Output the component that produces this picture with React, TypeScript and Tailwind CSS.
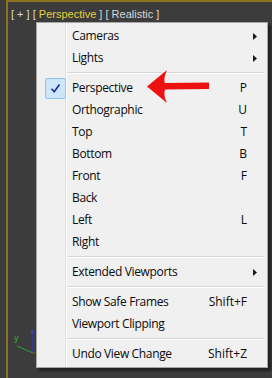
import React from "react";

type Row =
    | { kind: "item"; label: string; key?: string; sub?: boolean; checked?: boolean }
    | { kind: "sep" };

const rows: Row[] = [
    { kind: "item", label: "Cameras", sub: true },
    { kind: "item", label: "Lights", sub: true },
    { kind: "sep" },
    { kind: "item", label: "Perspective", key: "P", checked: true },
    { kind: "item", label: "Orthographic", key: "U" },
    { kind: "item", label: "Top", key: "T" },
    { kind: "item", label: "Bottom", key: "B" },
    { kind: "item", label: "Front", key: "F" },
    { kind: "item", label: "Back" },
    { kind: "item", label: "Left", key: "L" },
    { kind: "item", label: "Right" },
    { kind: "sep" },
    { kind: "item", label: "Extended Viewports", sub: true },
    { kind: "sep" },
    { kind: "item", label: "Show Safe Frames", key: "Shift+F" },
    { kind: "item", label: "Viewport Clipping" },
    { kind: "sep" },
    { kind: "item", label: "Undo View Change", key: "Shift+Z" },
];

function Arrow() {
    return (
        <svg width="4" height="7" viewBox="0 0 4 7" className="block">
            <path d="M0 0 L4 3.5 L0 7 Z" fill="#1a1a1a" />
        </svg>
    );
}

function Check() {
    return (
        <div className="w-[21px] h-[21px] rounded-[2px] border border-[#8fc3ef] bg-[#cde6fb] flex items-center justify-center">
            <svg width="11" height="11" viewBox="0 0 11 11">
                <path d="M1.5 5.8 L4.2 8.8 L9.5 1.5" stroke="#1c2a8a" strokeWidth="1.6" fill="none" />
            </svg>
        </div>
    );
}

function Menu() {
    return (
        <div className="absolute left-[36px] top-[22px] w-[232px] bg-[#f0f0f0] border border-[#a7a7a7] shadow-[3px_3px_2px_rgba(0,0,0,0.45)] py-[2px] text-[12px] text-[#0a0a0a] [font-family:'Open_Sans',sans-serif]">
            <div className="absolute left-[28px] top-0 bottom-0 w-px bg-[#e2e2e2]" />
            <div className="absolute left-[29px] top-0 bottom-0 w-px bg-white" />
            {rows.map((r, i) =>
                r.kind === "sep" ? (
                    <div key={i} className="h-[8px] flex items-center pl-[30px] pr-[3px]">
                        <div className="w-full">
                            <div className="h-px bg-[#d7d7d7]" />
                            <div className="h-px bg-white" />
                        </div>
                    </div>
                ) : (
                    <div key={i} className="relative h-[22px] flex items-center">
                        <div className="w-[35px] flex justify-center pl-[2px]">
                            {r.checked ? <Check /> : null}
                        </div>
                        <span className="flex-1 tracking-[-0.35px]">{r.label}</span>
                        <span className="text-right">{r.key ?? ""}</span>
                        <div className="w-[20px] pl-[6px]">{r.sub ? <Arrow /> : null}</div>
                    </div>
                )
            )}
        </div>
    );
}

function RedArrow() {
    return (
        <svg className="absolute left-[146px] top-[69px]" width="66" height="36" viewBox="0 0 66 36">
            <path d="M1 17.5 L21 1 Q17 10 19 14 L63 13.5 L63 20 L19 20.5 Q17 26 21 34 Z" fill="#ee1111" />
        </svg>
    );
}

function Gizmo() {
    return (
        <svg className="absolute left-[12px] top-[327px]" width="26" height="30" viewBox="0 0 26 30">
            <line x1="21" y1="6" x2="21" y2="26" stroke="#1f3fe0" strokeWidth="1" />
            <line x1="5" y1="19" x2="21" y2="26" stroke="#1faa2a" strokeWidth="1" />
            <line x1="21" y1="26" x2="24" y2="26" stroke="#e02020" strokeWidth="1" />
            <text x="19" y="6" fontSize="6" fill="#3050ff" fontFamily="DejaVu Sans">z</text>
            <text x="2" y="14" fontSize="8" fill="#33bb33" fontFamily="DejaVu Sans">y</text>
        </svg>
    );
}

export default function App() {
    return (
        <div className="relative w-[272px] h-[378px] bg-[#3c3c3c] overflow-hidden">
            <div className="ml-[6px] h-full border-l-2 border-t-2 border-[#8a7420]">
                <div className="pl-[3px] pt-[4px] text-[11px] text-[#d8d8d8] whitespace-pre [font-family:'Liberation_Sans',sans-serif]">
                    {"[ + ] [ "}
                    <span className="text-[#e8d03a]">Perspective</span>
                    {" ] [ Realistic ]"}
                </div>
            </div>
            <Gizmo />
            <Menu />
            <RedArrow />
        </div>
    );
}
